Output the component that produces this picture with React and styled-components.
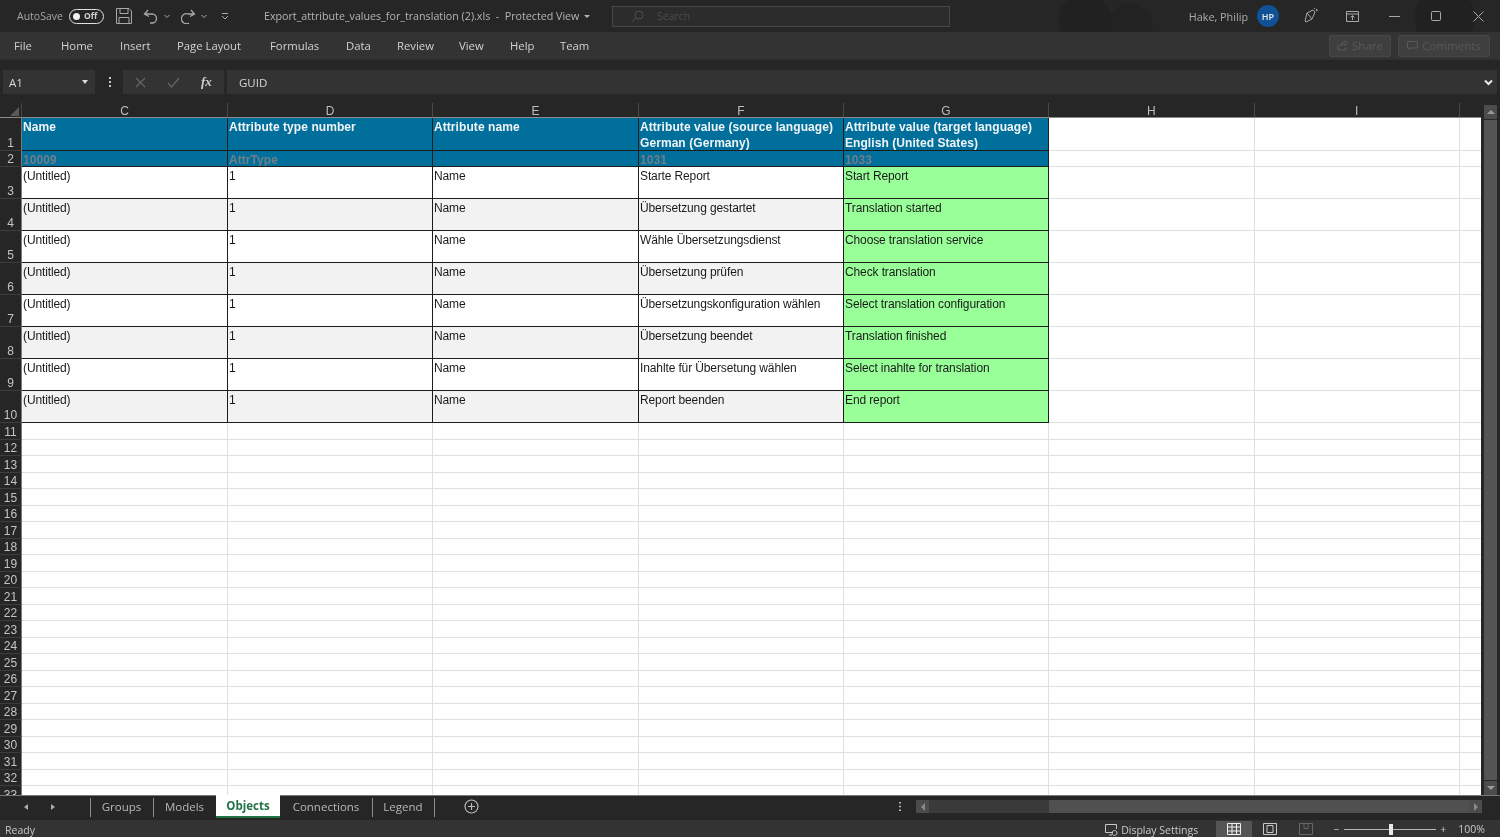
import React from "react";
import styled, { createGlobalStyle } from "styled-components";

const Global = createGlobalStyle`
  html, body { margin: 0; padding: 0; background: #262626; }
  #root { width: 1500px; height: 837px; overflow: hidden; }
  * { box-sizing: border-box; }
`;

const Window = styled.div`
  width: 1500px; height: 837px; display: flex; flex-direction: column;
  background: #262626; color: #d0d0d0; font-family: "Open Sans", "Noto Sans", sans-serif;
  overflow: hidden; filter: blur(.4px);
`;

const TitleBar = styled.div`
  height: 32px; flex: none; display: flex; align-items: center; position: relative;
  background-color: #262626;
  background-image:
    radial-gradient(circle at 1085px 20px, #212121 0 26px, transparent 27px),
    radial-gradient(circle at 1130px 26px, #222 0 22px, transparent 23px),
    radial-gradient(circle at 1445px 18px, #212121 0 30px, transparent 31px);
  padding-left: 17px; font-size: 10.5px; color: #a6a6a6;
`;
const AutoSave = styled.span` width: 52px; `;
const Toggle = styled.span`
  width: 35px; height: 15px; border: 1.5px solid #e0e0e0; border-radius: 8px; display: flex; align-items: center;
  padding-left: 3px; gap: 4px; font-size: 8.5px; font-weight: 700; color: #d0d0d0; line-height: 1;
  &::before { content: ""; width: 7px; height: 7px; border-radius: 50%; background: #f0f0f0; }
`;
const QuickIcons = styled.div` display: flex; align-items: center; margin-left: 12px; width: 148px; flex: none; color: #a8a8a8; `;
const Spacer = styled.span` width: ${p => p.$w}px; flex: none; `;
const FileName = styled.span` width: 348px; flex: none; white-space: pre; font-size: 10.7px; color: #b4b4b4; display: flex; align-items: center; gap: 5px; `;
const FileCaret = styled.span`
  width: 0; height: 0; border-left: 3px solid transparent; border-right: 3px solid transparent; border-top: 3px solid #b4b4b4;
`;
const SearchBox = styled.div`
  width: 338px; height: 21px; background: #2c2c2c; border: 1px solid #474747; display: flex; align-items: center;
  padding-left: 18px; gap: 13px; color: #4d4d4d; font-size: 10.5px;
`;
const TitleRight = styled.div` margin-left: auto; display: flex; align-items: center; height: 100%; `;
const UserName = styled.span` font-size: 10.8px; color: #ababab; margin-right: 9px; `;
const Avatar = styled.span`
  width: 22px; height: 22px; border-radius: 50%; background: #0f5296; color: #e8e8e8; font-size: 9px; font-weight: 600;
  display: flex; align-items: center; justify-content: center; margin-right: 24px;
`;
const WinBtn = styled.span` width: ${p => p.$w}px; margin-left: ${p => p.$ml || 0}px; display: flex; justify-content: center; color: #a8a8a8; `;

const MenuBar = styled.div`
  height: 28px; flex: none; display: flex; align-items: center; background: #333333; font-size: 11.3px; color: #d2d2d2;
  padding-left: 14px; border-bottom: 1px solid #2e2e2e; position: relative;
`;
const MenuItem = styled.span` width: ${p => p.$w}px; white-space: nowrap; `;
const MenuRight = styled.div` margin-left: auto; display: flex; gap: 7px; margin-right: 10px; `;
const GhostButton = styled.span`
  height: 22px; width: ${p => p.$w}px; border-radius: 2px; background: #3f3f3f; border: 1px solid #474747; color: #595959;
  font-size: 11.5px; display: flex; align-items: center; justify-content: center; gap: 4px;
`;

const FormulaRow = styled.div`
  height: 42px; flex: none; display: flex; align-items: center; padding: 2px 3px 0 3px; background: #262626; font-size: 11.5px;
`;
const NameBox = styled.div`
  width: 92px; height: 24px; background: #333; display: flex; align-items: center; justify-content: space-between;
  padding: 0 7px 0 6px; color: #d8d8d8; font-size: 11.5px;
`;
const Caret = styled.span`
  width: 0; height: 0; border-left: 3.5px solid transparent; border-right: 3.5px solid transparent; border-top: 4px solid #ddd;
`;
const Kebab = styled.span`
  width: 4px; height: 12px; margin: 0 11px 0 13px;
  background: radial-gradient(circle, #c8c8c8 1.1px, transparent 1.3px) 0 0 / 4px 4px repeat-y;
`;
const FormulaTools = styled.div`
  width: 101px; height: 24px; background: #333; display: flex; align-items: center; padding-left: 12px; gap: 21px; color: #666; margin-right: 3px;
`;
const Fx = styled.span` font-family: "Liberation Serif", serif; font-style: italic; font-weight: 700; color: #cfcfcf; font-size: 13px; `;
const FormulaInput = styled.div`
  flex: 1; height: 24px; background: #333; display: flex; align-items: center; padding-left: 12px; color: #d6d6d6; font-size: 11.5px; justify-content: space-between; padding-right: 4px;
`;
const Chevron = styled.span` color: #e8e8e8; display: flex; `;

const SheetArea = styled.div` height: 693px; flex: none; display: flex; background: #262626; padding-top: 1px; `;
const GridPane = styled.div` width: 1481px; flex: none; display: flex; flex-direction: column; overflow: hidden; `;

const ColHeadRow = styled.div` height: 15px; flex: none; display: flex; background: #262626; border-bottom: 1px solid #8a8a8a; `;
const Corner = styled.div`
  width: 22px; flex: none; position: relative; border-right: 1px solid #444;
  &::after { content: ""; position: absolute; right: 2px; bottom: 1px; border-left: 9px solid transparent; border-bottom: 9px solid #5a5a5a; }
`;
const ColHead = styled.div`
  width: ${p => p.$w}px; flex: none; text-align: center; font: 12px/16px "Liberation Sans", sans-serif; color: #bdbdbd; border-right: 1px solid #484848;
`;

const Rows = styled.div` flex: 1; min-height: 0; overflow: hidden; background: #fff; `;
const Row = styled.div` display: flex; height: ${p => p.$h}px; `;
const RowHead = styled.div`
  width: 22px; flex: none; background: #262626; color: #c4c4c4; font: 12px/1 "Liberation Sans", sans-serif;
  display: flex; align-items: flex-end; justify-content: center; padding-bottom: 1px; border-bottom: 1px solid #3d3d3d;
  border-right: 1px solid #7a7a7a;
`;
const Cell = styled.div`
  width: ${p => p.$w}px; flex: none; font: ${p => (p.$bold ? 700 : 400)} 12px/16px "Liberation Sans", sans-serif;
  letter-spacing: ${p => (p.$bold ? ".07px" : "-.12px")};
  padding: 1px 0 0 1px;
  white-space: pre; overflow: hidden;
  background: ${p => p.$bg};
  color: ${p => p.$color || "#1a1a1a"};
  border-right: 1px solid #1c1c1c;
  border-bottom: 1px solid #1c1c1c;
`;
const EmptyCell = styled.div`
  width: ${p => p.$w}px; flex: none; background: #fff; border-right: 1px solid #e0e0e0; border-bottom: 1px solid #e0e0e0;
`;

const VScroll = styled.div`
  flex: 1; display: flex; flex-direction: column; align-items: center; padding: 2px 2px 0 2px; gap: 1px;
`;
const VBtn = styled.div`
  width: 13px; height: 14px; flex: none; background: #4c4c4c; display: flex; align-items: center; justify-content: center;
  &::after { content: ""; border-left: 4px solid transparent; border-right: 4px solid transparent;
    ${p => (p.$down ? "border-top: 4px solid #9a9a9a;" : "border-bottom: 4px solid #9a9a9a;")} }
`;
const VThumb = styled.div` flex: 1; width: 13px; background: #545454; `;

const SheetBar = styled.div`
  height: 25px; flex: none; display: flex; align-items: stretch; background: #262626; border-top: 1px solid #777; font-size: 11.5px; color: #b8b8b8; position: relative;
`;
const TabNav = styled.div` width: 90px; flex: none; display: flex; align-items: center; padding: 0 0 3px 24px; gap: 23px; `;
const NavArrow = styled.span`
  width: 0; height: 0; border-top: 3.5px solid transparent; border-bottom: 3.5px solid transparent;
  ${p => (p.$right ? "border-left: 4px solid #aaa;" : "border-right: 4px solid #aaa;")}
`;
const Tab = styled.div`
  width: ${p => p.$w}px; flex: none; display: flex; align-items: center; justify-content: center; position: relative;
  padding-bottom: 3px;
  ${p => p.$active
    ? "background:#fff;color:#217346;font-weight:700;border-bottom:2px solid #217346;margin-top:-1px;height:23px;padding-bottom:0;"
    : p.$sep ? "&::before{content:'';position:absolute;left:0;top:2px;bottom:3px;width:1px;background:#8c8c8c;}" : ""}
`;
const AddSheet = styled.div` margin-left: 29px; display: flex; align-items: center; padding-bottom: 3px; `;
const ScrollWrap = styled.div` margin-left: auto; display: flex; align-items: center; padding: 0 18px 3px 0; `;
const HScroll = styled.div` width: 566px; height: 13px; margin-left: 14px; display: flex; background: #3a3a3a; `;
const HBtn = styled.div`
  width: 13px; flex: none; background: #4c4c4c; display: flex; align-items: center; justify-content: center;
  &::after { content: ""; border-top: 4px solid transparent; border-bottom: 4px solid transparent;
    ${p => (p.$right ? "border-left: 4px solid #8a8a8a;" : "border-right: 4px solid #8a8a8a;")} }
`;
const HTrack = styled.div` width: 120px; flex: none; `;
const HThumb = styled.div` flex: 1; background: #505050; `;

const StatusBar = styled.div`
  height: 17px; flex: none; display: flex; align-items: center; background: #333; font-size: 10.5px; color: #c8c8c8; padding: 3px 0 0 5px;
`;
const StatusRight = styled.div` margin: -2px 0 0 auto; display: flex; align-items: center; height: 16px; padding-right: 15px; `;
const DisplaySettings = styled.span` display: flex; align-items: center; gap: 2px; margin-right: 18px; padding-top: 2px; `;
const ViewBtn = styled.span`
  width: 36px; height: 100%; display: flex; align-items: center; justify-content: center; background: ${p => (p.$on ? "#555" : "transparent")};
`;
const Zoomer = styled.div` display: flex; align-items: center; margin-left: 9px; color: #c8c8c8; `;
const ZoomTrack = styled.div` width: 92px; height: 1px; background: #b8b8b8; margin: 0 4px 0 5px; position: relative; `;
const ZoomThumb = styled.span` position: absolute; left: 45px; top: -5px; width: 4px; height: 11px; background: #e8e8e8; `;
const ZoomPct = styled.span` margin-left: 12px; `;

const COLS = [206, 205, 206, 205, 205];
const EMPTY_COLS = [205.5, 205.5, 22];
const SPREAD = [...COLS, ...EMPTY_COLS];
const LETTERS = ["C", "D", "E", "F", "G", "H", "I", ""];

const DATA = [
  ["Starte Report", "Start Report"],
  ["Übersetzung gestartet", "Translation started"],
  ["Wähle Übersetzungsdienst", "Choose translation service"],
  ["Übersetzung prüfen", "Check translation"],
  ["Übersetzungskonfiguration wählen", "Select translation configuration"],
  ["Übersetzung beendet", "Translation finished"],
  ["Inahlte für Übersetung wählen", "Select inahlte for translation"],
  ["Report beenden", "End report"],
];

const Blanks = () => EMPTY_COLS.map((w, i) => <EmptyCell key={i} $w={w} />);

const Svg = ({ w, h, children, vb }) => (
  <svg width={w} height={h} viewBox={vb || `0 0 ${w} ${h}`} fill="none" stroke="currentColor" strokeWidth="1">{children}</svg>
);

export default function App() {
  const head = ["Name", "Attribute type number", "Attribute name", "Attribute value (source language)\nGerman (Germany)", "Attribute value (target language)\nEnglish (United States)"];
  const sub = ["10009", "AttrType", "", "1031", "1033"];
  return (
    <Window>
      <Global />
      <TitleBar>
        <AutoSave>AutoSave</AutoSave>
        <Toggle>Off</Toggle>
        <QuickIcons>
          <Svg w={16} h={16}><path d="M.5.5h12.500l2.500 2.500v12.500H.5z M4 .5v5h8v-5 M3 15.500v-6h10v6" /></Svg>
          <Spacer $w={11} />
          <Svg w={15} h={15}><path d="M5 1 1.500 5 6 7.500 M1.500 5H9a4.500 4.500 0 0 1 0 9H7" strokeWidth="1.300" /></Svg>
          <Spacer $w={6} />
          <Svg w={6} h={5}><path d="M.5 1 3 3.500 5.500 1" /></Svg>
          <Spacer $w={11} />
          <Svg w={15} h={15}><path d="M10 1l3.500 4-4.500 2.500 M13.500 5H7a5 5 0 1 0 1 9" strokeWidth="1.300" /></Svg>
          <Spacer $w={5} />
          <Svg w={6} h={5}><path d="M.5 1 3 3.500 5.500 1" /></Svg>
          <Spacer $w={14} />
          <Svg w={8} h={8}><path d="M1 1.500h6M1 4l3 3 3-3" /></Svg>
        </QuickIcons>
        <FileName>Export_attribute_values_for_translation (2).xls  -  Protected View<FileCaret /></FileName>
        <SearchBox>
          <Svg w={13} h={13}><circle cx="8" cy="5" r="4" /><path d="M5 8 1 12" /></Svg>
          Search
        </SearchBox>
        <TitleRight>
          <UserName>Hake, Philip</UserName>
          <Avatar>HP</Avatar>
          <WinBtn $w={16}>
            <Svg w={16} h={16}><path d="M2 13 4 5l6-3 2 2-3 7-6 3zM4 5l5 6M11 1l1-1M13 3l2-1M13 1l1 1" /></Svg>
          </WinBtn>
          <WinBtn $w={14} $ml={26}>
            <Svg w={13} h={11}><path d="M.5.5h12v10H.5zM.5 3h12M6.500 9V5M4.500 6.500l2-2 2 2" /></Svg>
          </WinBtn>
          <WinBtn $w={42} $ml={14}>
            <Svg w={11} h={11}><path d="M0 5.500h11" /></Svg>
          </WinBtn>
          <WinBtn $w={42}>
            <Svg w={11} h={11}><rect x=".5" y=".5" width="9" height="9" rx="1" /></Svg>
          </WinBtn>
          <WinBtn $w={43}>
            <Svg w={11} h={11}><path d="M.5.5l10 10M10.500.5l-10 10" /></Svg>
          </WinBtn>
        </TitleRight>
      </TitleBar>

      <MenuBar>
        <MenuItem $w={47}>File</MenuItem>
        <MenuItem $w={59}>Home</MenuItem>
        <MenuItem $w={57}>Insert</MenuItem>
        <MenuItem $w={93}>Page Layout</MenuItem>
        <MenuItem $w={76}>Formulas</MenuItem>
        <MenuItem $w={51}>Data</MenuItem>
        <MenuItem $w={62}>Review</MenuItem>
        <MenuItem $w={51}>View</MenuItem>
        <MenuItem $w={50}>Help</MenuItem>
        <MenuItem $w={40}>Team</MenuItem>
        <MenuRight>
          <GhostButton $w={62}>
            <Svg w={11} h={11}><path d="M1 5v5h8V7M3 6c1-3 3-4 5-4V.5L10.500 3 8 5.500V4C6 4 4 5 3 6z" /></Svg>
            Share
          </GhostButton>
          <GhostButton $w={92}>
            <Svg w={11} h={11}><path d="M.5 1.500h10v6.500H4L2 10V8H.5z" /></Svg>
            Comments
          </GhostButton>
        </MenuRight>
      </MenuBar>

      <FormulaRow>
        <NameBox>A1<Caret /></NameBox>
        <Kebab />
        <FormulaTools>
          <Svg w={11} h={11}><path d="M1 1l9 9M10 1l-9 9" strokeWidth="1.200" /></Svg>
          <Svg w={13} h={11}><path d="M1 6l3.500 4L12 1" strokeWidth="1.200" /></Svg>
          <Fx>fx</Fx>
        </FormulaTools>
        <FormulaInput>
          GUID
          <Chevron><Svg w={9} h={7}><path d="M1 1.500l3.500 3.500L8 1.500" strokeWidth="2" /></Svg></Chevron>
        </FormulaInput>
      </FormulaRow>

      <SheetArea>
        <GridPane>
          <ColHeadRow>
            <Corner />
            {LETTERS.map((l, i) => <ColHead key={i} $w={SPREAD[i]}>{l}</ColHead>)}
          </ColHeadRow>
          <Rows>
            <Row $h={33}>
              <RowHead>1</RowHead>
              {head.map((t, i) => <Cell key={i} $w={COLS[i]} $bg="#006f9b" $color="#f0f4f6" $bold>{t}</Cell>)}
              <Blanks />
            </Row>
            <Row $h={16}>
              <RowHead>2</RowHead>
              {sub.map((t, i) => <Cell key={i} $w={COLS[i]} $bg="#006f9b" $color="#6f7f88" $bold>{t}</Cell>)}
              <Blanks />
            </Row>
            {DATA.map(([de, en], i) => {
              const bg = i % 2 ? "#f2f2f2" : "#ffffff";
              return (
                <Row key={i} $h={32}>
                  <RowHead>{i + 3}</RowHead>
                  <Cell $w={COLS[0]} $bg={bg}>(Untitled)</Cell>
                  <Cell $w={COLS[1]} $bg={bg}>1</Cell>
                  <Cell $w={COLS[2]} $bg={bg}>Name</Cell>
                  <Cell $w={COLS[3]} $bg={bg}>{de}</Cell>
                  <Cell $w={COLS[4]} $bg="#99ff99">{en}</Cell>
                  <Blanks />
                </Row>
              );
            })}
            {Array.from({ length: 23 }, (_, i) => (
              <Row key={i} $h={16.5}>
                <RowHead>{i + 11}</RowHead>
                {COLS.map((w, j) => <EmptyCell key={j} $w={w} />)}
                <Blanks />
              </Row>
            ))}
          </Rows>
        </GridPane>
        <VScroll>
          <VBtn />
          <VThumb />
          <VBtn $down />
        </VScroll>
      </SheetArea>

      <SheetBar>
        <TabNav><NavArrow /><NavArrow $right /></TabNav>
        <Tab $w={63} $sep>Groups</Tab>
        <Tab $w={63} $sep>Models</Tab>
        <Tab $active $w={64}>Objects</Tab>
        <Tab $w={92}>Connections</Tab>
        <Tab $w={62} $sep>Legend</Tab>
        <Tab $w={1} $sep />
        <AddSheet>
          <Svg w={15} h={15}><circle cx="7.500" cy="7.500" r="6.500" strokeWidth="1.200" /><path d="M7.500 4v7M4 7.500h7" strokeWidth="1.200" /></Svg>
        </AddSheet>
        <ScrollWrap>
          <Svg w={4} h={11}><path d="M2 1v1.500M2 4.700v1.500M2 8.500V10" strokeWidth="2" /></Svg>
          <HScroll>
            <HBtn />
            <HTrack />
            <HThumb />
            <HBtn $right />
          </HScroll>
        </ScrollWrap>
      </SheetBar>

      <StatusBar>
        Ready
        <StatusRight>
          <DisplaySettings>
            <Svg w={14} h={12}><path d="M8 8.500H.5v-8h11V5M9.500 6.500a2.500 2.500 0 1 0 .01 0M4 11h3" /></Svg>
            Display Settings
          </DisplaySettings>
          <ViewBtn $on>
            <Svg w={14} h={12}><path d="M.5.5h13v11H.5zM.5 4h13M.5 8h13M5 .5v11M9.500.5v11" stroke="#f0f0f0" /></Svg>
          </ViewBtn>
          <ViewBtn>
            <Svg w={14} h={12}><path d="M.5.5h13v11H.5zM4 2.500h6v7H4z" stroke="#c8c8c8" /></Svg>
          </ViewBtn>
          <ViewBtn>
            <Svg w={14} h={12}><path d="M.5.5h13v11H.5zM5 .5v5h4v-5" stroke="#666" /></Svg>
          </ViewBtn>
          <Zoomer>
            −
            <ZoomTrack><ZoomThumb /></ZoomTrack>
            +
            <ZoomPct>100%</ZoomPct>
          </Zoomer>
        </StatusRight>
      </StatusBar>
    </Window>
  );
}
